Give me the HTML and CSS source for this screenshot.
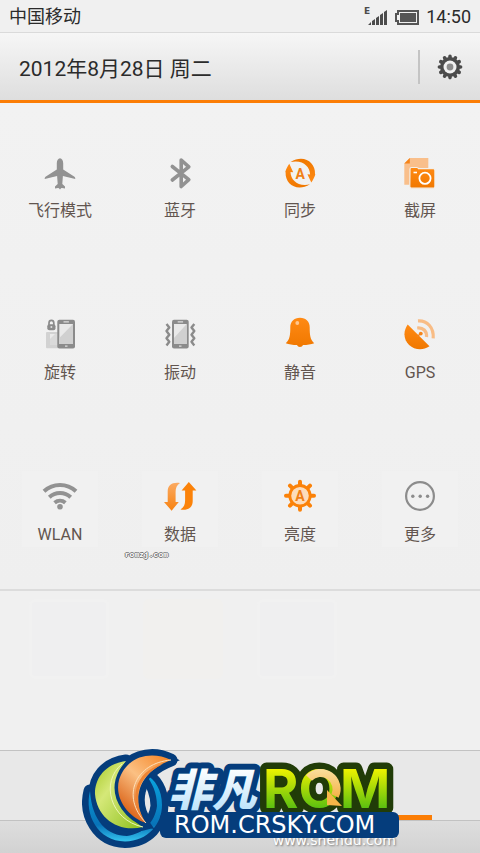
FILE: index.html
```html
<!DOCTYPE html>
<html lang="zh-CN">
<head>
<meta charset="utf-8">
<meta name="viewport" content="width=device-width, initial-scale=1">
<title>快捷开关</title>
<link rel="stylesheet" href="styles.css">
</head>
<body>
<svg class="defs" width="0" height="0" aria-hidden="true">
  <defs>
    <linearGradient id="orange" x1="0" y1="0" x2="0" y2="1"><stop offset="0" stop-color="#ff8a14"/><stop offset="1" stop-color="#f07800"/></linearGradient>
    <linearGradient id="fade" x1="0" y1="0" x2="0" y2="1"><stop offset="0" stop-color="#fbaa62"/><stop offset="1" stop-color="#f78210"/></linearGradient>
    <linearGradient id="green" x1="0" y1="0" x2="0" y2="1"><stop offset=".2" stop-color="#eef200"/><stop offset=".8" stop-color="#5cc010"/></linearGradient>
    <linearGradient id="leaf" x1="0" y1="0" x2="1" y2="1"><stop offset="0" stop-color="#a5c824"/><stop offset=".35" stop-color="#d5e878"/><stop offset="1" stop-color="#8cc01c"/></linearGradient>
    <linearGradient id="flame" x1="1" y1="0" x2="0.3" y2="1"><stop offset="0" stop-color="#f58220"/><stop offset=".5" stop-color="#fbc083"/><stop offset="1" stop-color="#d85c10"/></linearGradient>
    <linearGradient id="wave" x1="0" y1="0" x2="0" y2="1"><stop offset="0" stop-color="#0aa5e0"/><stop offset=".75" stop-color="#0873b8"/><stop offset="1" stop-color="#35c4ee"/></linearGradient>
    <linearGradient id="ice" x1="0" y1="0" x2="0" y2="1"><stop offset=".2" stop-color="#ffffff"/><stop offset=".9" stop-color="#b9e2fb"/></linearGradient>
    <linearGradient id="gold" gradientUnits="userSpaceOnUse" x1="0" y1="768" x2="0" y2="806"><stop offset="0" stop-color="#fbe0a0"/><stop offset="1" stop-color="#f3a52c"/></linearGradient>
  </defs>
</svg>
<div class="screen">
  <header class="status">
    <span class="carrier">中国移动</span>
    <span class="indicators">
      <svg width="24" height="20" viewBox="0 0 24 20" aria-hidden="true"><text class="net" x="0" y="7">E</text><path fill="#4c4c4c" d="M4 18l3-3v3zM8 18v-4l3-2v6zM12 18v-7l3-2v9zM16 18V8l3-2v12zM20 18V5l3-2v15z"/></svg>
      <svg width="26" height="20" viewBox="0 0 26 20" aria-hidden="true"><path d="M4 4h20v13H4v-3H2V7h2z" fill="none" stroke="#555" stroke-width="2"/><path fill="#555" d="M6 6h16v9H6z"/></svg>
      <time>14:50</time>
    </span>
  </header>
  <div class="datebar">
    <h1 class="date">2012年8月28日 周二</h1>
    <button class="settings" type="button" aria-label="设置">
      <svg width="26" height="26" viewBox="0 0 26 26" aria-hidden="true">
        <path stroke="#4b4b4b" stroke-width="3.6" stroke-linecap="round" d="M13 2.400v21.200M2.400 13h21.200M7.600 3.800l10.800 18.400M18.400 3.800L7.600 22.200M3.800 7.600l18.400 10.800M3.800 18.400L22.200 7.600"/>
        <circle cx="13" cy="13" r="10" fill="#4b4b4b"/><circle cx="13" cy="13" r="6.500" fill="#f1f1f1"/><circle cx="13" cy="13" r="3.400" fill="#8c8c8c"/>
      </svg>
    </button>
  </div>
  <main class="toggles">
    <button class="toggle" type="button">
      <svg class="icon" viewBox="0 0 40 40" aria-hidden="true"><path fill="#929292" d="M20 5.200c1.800 0 3.200 2.300 3.200 5v6.300l10.900 6.900c1 .7 1.400 1.600 1.100 2.700L22.900 23l-.6 8 2.700 2.500v1.900l-3-.3c-.6 0-1 .3-2 1.400-1-1.100-1.400-1.400-2-1.400l-3 .3v-1.900l2.700-2.500-.6-8L4.800 26.100c-.3-1.100.1-2 1.100-2.700l10.900-6.900v-6.300c0-2.700 1.400-5 3.200-5z"/></svg>
      <span>飞行模式</span>
    </button>
    <button class="toggle" type="button">
      <svg class="icon" viewBox="0 0 40 40" aria-hidden="true"><path d="M12.300 13.500l16.500 13.200-7.600 6.800V7l7.600 6.800L12.300 27" fill="none" stroke="#929292" stroke-width="3.600" stroke-linecap="round" stroke-linejoin="round"/></svg>
      <span>蓝牙</span>
    </button>
    <button class="toggle" type="button">
      <svg class="icon" viewBox="0 0 40 40" aria-hidden="true"><g fill="url(#orange)"><path id="arc" d="M9.300 10.800l3.900 8.400-2.700-.3C10.700 27 18 34 30 31.300 17 39.500 5 31 5.600 19.500l-.3-.7c1-2.800 2.400-6 4-8z"/><use href="#arc" transform="rotate(180 20.300 20.200)"/></g><text class="mark" x="20.300" y="25.500">A</text></svg>
      <span>同步</span>
    </button>
    <button class="toggle" type="button">
      <svg class="icon" viewBox="0 0 40 40" aria-hidden="true"><path fill="#f9bf8b" d="M4.300 10.500L9.800 5h18.500v26.700h-24z"/><path fill="#f5841a" d="M4.300 10.500L9.800 5v5.500z"/><path fill="url(#orange)" stroke="#f3efe9" stroke-width="1.200" d="M10 16q0-1.500 1.500-1.500h5.500q1 0 1.500 1.200h14.700q1.700 0 1.700 1.700v16q0 1.800-1.700 1.800H11.500q-1.700 0-1.700-1.700z"/><circle cx="25" cy="25.300" r="5.600" fill="none" stroke="#fff" stroke-width="1.800"/><path stroke="#fff" stroke-width="1.600" d="M13.500 19.500h3.500"/></svg>
      <span>截屏</span>
    </button>
    <button class="toggle" type="button">
      <svg class="icon" viewBox="0 0 40 40" aria-hidden="true"><path fill="#d2d2d2" d="M7 17h11v16.300H7q-1 0-1-1V18q0-1 1-1z"/><path fill="#ebebeb" d="M10 19h8v11h-8z"/><path fill="#dadada" d="M10 30V24l5-5h3v11z"/><path d="M9 10V8q0-2.600 2.400-2.600T13.800 8v2" fill="none" stroke="#8b8b8b" stroke-width="1.700"/><rect x="7.300" y="9.200" width="8.200" height="6" rx="2" fill="#8b8b8b"/><circle cx="11.400" cy="12" r="1" fill="#ddd"/><rect x="17.300" y="4.700" width="17.700" height="28.700" rx="2" fill="#8b8b8b"/><path fill="#e9e9e9" d="M19.300 9h13.700v20H19.300z"/><path fill="#d0d0d0" d="M33 9v20H19.300v-6z"/><path stroke="#ddd" stroke-width="1.200" d="M23.500 6.800h5.400M25 31.200h2.500"/></svg>
      <span>旋转</span>
    </button>
    <button class="toggle" type="button">
      <svg class="icon" viewBox="0 0 40 40" aria-hidden="true"><rect x="12" y="4.700" width="16.700" height="28.700" rx="2" fill="#8b8b8b"/><path fill="#e9e9e9" d="M14 9h12.700v20H14z"/><path fill="#d0d0d0" d="M26.700 9v20H14v-6z"/><path stroke="#ddd" stroke-width="1.200" d="M17.700 6.800h5.400M19 31.200h2.500"/><path d="M6.500 9l2.800 3.500-2.800 3.600 2.800 3.600-2.800 3.600 2.800 3.500-2.800 3.600M34.300 9l-2.800 3.500 2.800 3.600-2.800 3.600 2.800 3.600-2.800 3.500 2.800 3.600" fill="none" stroke="#8b8b8b" stroke-width="2.400" stroke-linejoin="round"/></svg>
      <span>振动</span>
    </button>
    <button class="toggle" type="button">
      <svg class="icon" viewBox="0 0 40 40" aria-hidden="true"><path fill="url(#orange)" d="M20 2.700c6 0 9.700 4 9.700 9.500 0 8 .5 12.300 4.500 16-3 1.200-7 1.700-11.200 1.900-.5 1.300-1.600 2-3 2s-2.500-.7-3-2c-4.200-.2-8.200-.7-11.200-1.900 4-3.700 4.500-8 4.500-16 0-5.500 3.700-9.500 9.700-9.500z"/><circle cx="17.300" cy="8" r="1.900" fill="#ffc78e"/></svg>
      <span>静音</span>
    </button>
    <button class="toggle" type="button">
      <svg class="icon" viewBox="0 0 40 40" aria-hidden="true"><path fill="url(#orange)" d="M7.700 9.500l21.800 21.800C15 41-3 25 7.700 9.500z"/><path stroke="#f5841a" stroke-width="1.500" d="M17 22l4-4"/><circle cx="20.800" cy="18.600" r="1.900" fill="#f5841a"/><path d="M18 5.900c9-.6 16 6.500 15.200 17.500M17.200 13c6-.6 9.800 3 9.300 9" fill="none" stroke="#f8bc85" stroke-width="3.200"/></svg>
      <span>GPS</span>
    </button>
    <button class="toggle ghosted" type="button">
      <svg class="icon" viewBox="0 0 40 40" aria-hidden="true"><path d="M4 14.300c9-8.400 23-8.400 32 0M9.300 20.300c6-5.600 15.400-5.600 21.400 0M14.600 25.700c3.300-2.700 7.500-2.700 10.800 0" fill="none" stroke="#929292" stroke-width="4"/><circle cx="20" cy="29.800" r="2.800" fill="#929292"/></svg>
      <span>WLAN</span>
    </button>
    <button class="toggle ghosted" type="button">
      <svg class="icon" viewBox="0 0 40 40" aria-hidden="true"><path fill="url(#fade)" d="M20 6C12 5 7.700 8 7.700 14.500V25H4l7.600 8.700 7.200-8.700h-3.200V15c0-4 1.200-7 4.400-9z"/><path fill="#fb8209" d="M20.400 32.600c8 1 12.300-2 12.300-8.500V13.600h3.700l-7.600-8.700-7.200 8.700h3.500v10c0 4-1.200 7-4.700 9z"/></svg>
      <span>数据</span>
    </button>
    <button class="toggle ghosted" type="button">
      <svg class="icon" viewBox="0 0 40 40" aria-hidden="true"><path d="M20 4.700v28M6 18.700h28M10 8.700l20 20M30 8.700l-20 20" stroke="#fb8209" stroke-width="4" stroke-linecap="round"/><circle cx="20" cy="18.700" r="10.200" fill="#fcdcbb" stroke="#fb8209" stroke-width="2.800"/><text class="mark" x="20" y="23.700">A</text></svg>
      <span>亮度</span>
    </button>
    <button class="toggle ghosted" type="button">
      <svg class="icon" viewBox="0 0 40 40" aria-hidden="true"><circle cx="20" cy="19" r="13.900" fill="none" stroke="#8c8c8c" stroke-width="2.200"/><g fill="#8c8c8c"><circle cx="12.800" cy="19.200" r="1.700"/><circle cx="20.200" cy="19.200" r="1.700"/><circle cx="27.600" cy="19.200" r="1.700"/></g></svg>
      <span>更多</span>
    </button>
    <small class="credit">romzj.com</small>
  </main>
  <section class="shelf" aria-hidden="true">
    <i class="ghost"></i><i class="ghost warm"></i><i class="ghost"></i>
  </section>
  <footer class="dock">
    <div class="tabs"><i></i><i class="active"></i></div>
    <div class="base"><span class="site">www.shendu.com</span></div>
  </footer>
  <div class="brand">
    <svg width="320" height="106" viewBox="82 747 320 106" role="img" aria-label="非凡ROM">
      <g fill="#053d7c" stroke="#053d7c" stroke-width="13" stroke-linejoin="round">
        <path d="M90 791C84 815 98 841 125 841.500 148 841 162 824 162 805 162 790 155 779 146 775 152 783 157 792 157 806 155 822 143 834 127 836 108 836 92 822 90 791z"/>
        <path d="M126 761C105 764 95 778 95 794 97 818 118 833 143 827 122 815 108 785 126 761z"/>
        <path d="M171 760C150 750 126 757 119 780 114 800 130 818 146 823 134 806 132 775 171 760z"/>
      </g>
      <path fill="url(#wave)" d="M90 791C84 815 98 841 125 841.500 148 841 162 824 162 805 162 790 155 779 146 775 152 783 157 792 157 806 155 822 143 834 127 836 108 836 92 822 90 791z"/>
      <g class="petals">
        <path fill="url(#leaf)" d="M126 761C105 764 95 778 95 794 97 818 118 833 143 827 122 815 108 785 126 761z"/>
        <path fill="url(#flame)" d="M171 760C150 750 126 757 119 780 114 800 130 818 146 823 134 806 132 775 171 760z"/>
      </g>
      <path d="M122 764C100 782 110 820 143 827" fill="none" stroke="#eef6b8" stroke-width="1"/>
      <path fill="#ee8433" d="M163 764C134 771 127 801 146 823 134 806 132 779 163 764z"/>
      <path d="M171 760C136 763 120 796 146 823" fill="none" stroke="#fde0ba" stroke-width="1"/>
      <text class="brand-cn" x="168" y="806">非凡</text>
      <text class="brand-rom" x="263" y="808">ROM</text>
      <path d="M309 778A16 16 0 0 1 335 796" fill="none" stroke="url(#gold)" stroke-width="8"/>
      <path fill="#f6b648" d="M327 790l15 16-15-1z"/>
      <rect x="160" y="812" width="239" height="26" rx="6" fill="#053d7c"/>
      <text class="brand-url" x="174" y="833">ROM.CRSKY.COM</text>
    </svg>
  </div>
</div>
</body>
</html>
```
FILE: styles.css
```css
* {
  box-sizing: border-box;
}

body {
  margin: 0;
  background: #f0f0f0;
  color: #2b2b2b;
  font-family: Roboto, "Noto Sans CJK SC", sans-serif;
}

button {
  border: 0;
  padding: 0;
  background: none;
  color: inherit;
  font: inherit;
}

svg {
  display: block;
}

.defs {
  position: absolute;
}

.screen {
  position: relative;
  display: flex;
  flex-direction: column;
  min-height: 100vh;
  overflow: hidden;
}

.status {
  display: flex;
  align-items: center;
  justify-content: space-between;
  height: 33px;
  padding: 2px 9px 0;
  border-bottom: 1px solid #dadada;
  font-size: 18px;
  line-height: 30px;
}

.indicators {
  display: flex;
  align-items: center;
  gap: 6px;
}

.net {
  font: bold 9px "DejaVu Sans", sans-serif;
  fill: #4c4c4c;
}

.datebar {
  display: flex;
  align-items: center;
  justify-content: space-between;
  height: 70px;
  padding-left: 19px;
  border-bottom: 3px solid #fb7d05;
  background: linear-gradient(#f6f6f6, #dedede);
}

.date {
  margin: 0;
  font-size: 21px;
  font-weight: 400;
}

.settings {
  display: flex;
  align-items: center;
  justify-content: center;
  width: 62px;
  height: 34px;
  border-left: 2px solid #c4c4c4;
}

.toggles {
  position: relative;
  display: grid;
  grid-template-columns: repeat(4, 1fr);
  grid-auto-rows: 162px;
  background: linear-gradient(#f2f2f2, #efefef);
  border-bottom: 2px solid #dcdcdc;
}

.toggle {
  display: flex;
  flex-direction: column;
  align-items: center;
  gap: 8px;
  padding-top: 50px;
  color: #62554f;
  font-size: 16px;
  line-height: 20px;
}

.ghosted {
  background: linear-gradient(#f1f1f1, #f1f1f1) center 44px / 76px 76px no-repeat;
}

.icon {
  width: 40px;
  height: 40px;
}

.mark {
  font-weight: 700;
  font-size: 14px;
  fill: #f07f16;
  text-anchor: middle;
}

.credit {
  position: absolute;
  bottom: 28px;
  left: 26%;
  color: #fff;
  font: bold 8px/12px "Liberation Mono", monospace;
  text-shadow: 1px 0 #777, -1px 0 #777, 0 1px #777, 0 -1px #777;
}

.shelf {
  display: grid;
  grid-template-columns: repeat(4, 1fr);
  flex: 1;
  padding: 8px 12px;
  min-height: 100px;
}

.ghost {
  width: 80px;
  height: 80px;
  margin: 0 auto;
  border: 3px solid #f1f1f1;
  border-radius: 6px;
  background: #efeff0;
}

.warm {
  border-color: #f1f0ee;
  background: #f1f0ee;
}

.dock {
  border-top: 1px solid #c2c2c2;
  background: #e8e8e8;
}

.tabs {
  display: grid;
  grid-template-columns: 1fr 1fr;
  height: 69px;
  align-items: end;
  justify-items: center;
}

.active {
  width: 60%;
  height: 5px;
  background: #fb7d05;
}

.base {
  height: 33px;
  padding: 9px 84px 0 0;
  border-top: 1px solid #c2c2c2;
  background: linear-gradient(#dedede, #d2d2d2);
  text-align: right;
}

.site {
  color: #fff;
  font: 14px/20px "DejaVu Sans", sans-serif;
  text-shadow: 1px 1px 2px #777;
}

.brand {
  position: absolute;
  right: 0;
  bottom: 0;
  left: 0;
  display: flex;
  justify-content: center;
  padding-left: 4px;
}

.brand text {
  paint-order: stroke;
  stroke-linejoin: round;
}

.petals {
  paint-order: stroke;
  stroke: #053d7c;
  stroke-width: 7px;
}

.brand-cn {
  font: italic 900 44px "Noto Sans CJK SC", sans-serif;
  fill: url(#ice);
  stroke: #053d7c;
  stroke-width: 12px;
}

.brand-rom {
  font: 700 54px Inter, sans-serif;
  fill: url(#green);
  stroke: #213c08;
  stroke-width: 13px;
}

.brand-url {
  font: 24px "DejaVu Sans", sans-serif;
  fill: #fff;
}
```
